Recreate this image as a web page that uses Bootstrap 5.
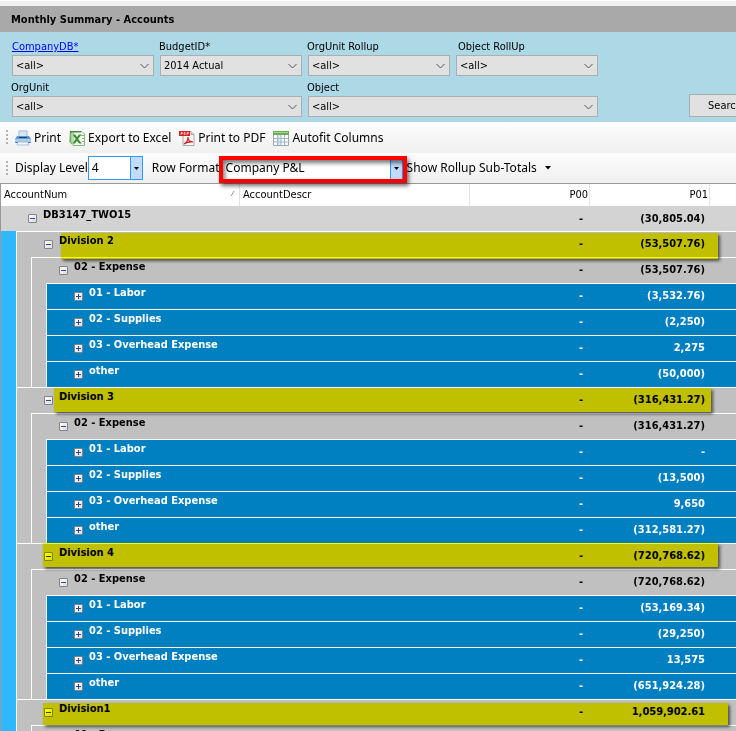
<!DOCTYPE html>
<html lang="en">
<head>
<meta charset="utf-8">
<meta name="viewport" content="width=device-width, initial-scale=1">
<title>Monthly Summary - Accounts</title>
<link href="https://cdn.jsdelivr.net/npm/bootstrap@5.3.0/dist/css/bootstrap.min.css" rel="stylesheet">
<style>
body{font-family:"DejaVu Sans Condensed","DejaVu Sans",sans-serif;font-size:11px;line-height:16px;color:#000;background:#fff;overflow:hidden}
.topline{height:6px;background:#f0f0f0;border-top:1px solid #fff}
.titlebar{height:26px;padding-left:11px;background:#a9a9a9}
.titlebar h1{font-size:11px;font-weight:700;line-height:28px;margin:0}
.filters{background:#add8e6;padding:6px 0 5px 12px;height:90px}
.fgrid{display:grid;grid-template-columns:repeat(4,142px);column-gap:6px;row-gap:3px;flex:none}
.wide{grid-column:span 2}
.fgrid label,.fgrid a{display:block;line-height:18px;height:17px;width:max-content;margin-left:-1px}
.fgrid a{color:#00f;margin-left:0}
.fgrid .near{margin-left:2px}
.form-select.pick{height:21px;padding:0 18px 0 3px;font-size:11px;line-height:19px;border:1px solid #adadad;border-radius:0;color:#000;background-color:#e1e1e1;background-size:9px 6px;background-position:right 4px center;background-image:url("data:image/svg+xml,%3Csvg xmlns='http://www.w3.org/2000/svg' viewBox='0 0 9 6'%3E%3Cpath d='M.5 1l4 4 4-4' fill='none' stroke='%23555'/%3E%3C/svg%3E")}
.btn.go{flex:none;width:72px;height:23px;margin-left:91px;padding:0;font-size:11px;line-height:19px;border:1px solid #adadad;border-radius:0;background:#e1e1e1;color:#000}
.tools{font-family:"Noto Sans",sans-serif;font-size:12px;padding-left:6px}
.tools.one{height:31px;background:linear-gradient(#fdfdfd,#f0f0f0)}
.tools.two{height:30px;background:linear-gradient(#fcfcfc,#f0f0f0)}
.grip{width:2px;height:15px;margin-right:7px;flex:none;background:repeating-linear-gradient(#b0b0b0 0 2px,transparent 2px 4px)}
.btn.tool{font-size:12px;line-height:16px;padding:0;border:0;border-radius:0;color:#000;display:flex;align-items:center;gap:3px;white-space:nowrap;flex:none}
.one .tool{margin-right:8px}
.two .tool{margin-left:4px}
.tool svg{width:16px;height:16px}
.tools label{white-space:nowrap;flex:none}
.tools .fl{margin:0 2px 0 9px}
.form-select.combo{height:24px;padding:0 18px 0 3px;border:1px solid #39f;border-radius:0;font-size:12px;line-height:22px;color:#000;background-color:#fff;background-size:12px 22px;background-position:right center;background-image:url("data:image/svg+xml,%3Csvg xmlns='http://www.w3.org/2000/svg' viewBox='0 0 12 22'%3E%3Cpath d='M0 0h12v22H0z' fill='%23c0dcfa'/%3E%3Cpath d='M0 0h1v22H0z' fill='%2339f'/%3E%3Cpath d='M4 10h5l-2.500 3z'/%3E%3C/svg%3E")}
.lvl{width:55px;flex:none}
.fmt{width:181px;flex:none}
.callout{position:absolute;inset:0 -4px -3px -3px;border:4px solid #f00;box-shadow:2px 3px 4px #0008,inset 2px 3px 4px #0008;pointer-events:none}
.accounts{table-layout:fixed;width:100%;border-collapse:separate;border-spacing:0;border-left:1px solid #999;border-top:1px solid #999}
.accounts th{height:22px;padding:0 1px 1px 3px;font-weight:400;line-height:14px;border-right:1px solid #e3e3e3;white-space:nowrap}
.accounts th:last-child{border-right:0}
.c1{width:239px}.c2{width:230px}.c3,.c4{width:120px}
.accounts td{height:26px;padding:0;font-weight:700;white-space:nowrap}
.accounts td+td{border-top:1px solid #fff}
.accounts .num{text-align:right;padding:0 5px 1px 0}
.accounts .num.zero{padding-right:7px}
.l0 td{background:#d3d3d3;height:25px}.l0 td+td{border-color:#d3d3d3}
.l1 td,.l2 td{background:#c0c0c0}
.l3 td{background:#0080c0;color:#fff}
.tree{height:26px}
.accounts .l0 td,.l0 .tree{height:25px}
.rail{width:15px;background:#30b8ff}
.guide{width:15px;background:#c0c0c0;border-left:1px solid #fff}
.node{display:flex;gap:6px;padding-left:27px;flex:1;border-top:1px solid #fff;border-left:1px solid #fff;line-height:17px}
.l0 .node{border:0}
.knob{position:relative;width:9px;height:9px;margin-top:8px;padding:0;border:1px solid #848484;border-radius:1px;background:linear-gradient(135deg,#fff,#dcdcdc);flex:none}
.knob::before,.l3 .knob::after{content:"";position:absolute;left:1px;top:3px;width:5px;height:1px;background:#2b4a9c}
.l3 .knob::after{left:3px;top:1px;width:1px;height:5px}
.marked{position:relative}
.glow{position:absolute;background:#ff0;mix-blend-mode:multiply;box-shadow:2px 2px 3px #0009;pointer-events:none;top:0;height:24px;left:42px;right:18px}
.g2{top:2px;height:26px;left:60px}
.g3{top:1px;left:53px;right:25px}
.g1{top:4px;height:22px;right:8px}
</style>
</head>
<body>
<div class="topline"></div>
<header class="titlebar"><h1>Monthly Summary - Accounts</h1></header>
<form class="filters d-flex align-items-end overflow-hidden">
  <div class="fgrid">
    <div><a href="#">CompanyDB*</a><select class="form-select pick" aria-label="CompanyDB"><option>&lt;all&gt;</option></select></div>
    <div><label for="bud">BudgetID*</label><select id="bud" class="form-select pick"><option>2014 Actual</option></select></div>
    <div><label for="our">OrgUnit Rollup</label><select id="our" class="form-select pick"><option>&lt;all&gt;</option></select></div>
    <div><label class="near" for="obr">Object RollUp</label><select id="obr" class="form-select pick"><option>&lt;all&gt;</option></select></div>
    <div class="wide"><label for="ou">OrgUnit</label><select id="ou" class="form-select pick"><option>&lt;all&gt;</option></select></div>
    <div class="wide"><label for="ob">Object</label><select id="ob" class="form-select pick"><option>&lt;all&gt;</option></select></div>
  </div>
  <button type="button" class="btn go">Search</button>
</form>
<div class="tools one d-flex align-items-center">
  <span class="grip"></span>
  <button type="button" class="btn tool"><svg viewBox="0 0 16 16"><path d="M4 1h8v6H4z" fill="#f4faff" stroke="#8fb2cf"/><path d="M5 3h6M5 5h6" stroke="#b9d3e6"/><path d="M2 6h12l2 3v4H0V9z" fill="#5d98cf"/><path d="M0 9h16v3H0z" fill="#a9cdea"/><path d="M4 7h8v1H4z" fill="#20466e"/><path d="M1 12h14v1H1z" fill="#2e6aa3"/><path d="M3 12h10l1 3H2z" fill="#eef6fc" stroke="#86a9c6" stroke-width=".6"/></svg>Print</button>
  <button type="button" class="btn tool"><svg viewBox="0 0 16 16"><path d="M4 1.500h9l2.500 2.500v11.500H4z" fill="#f3faef" stroke="#8ab77b"/><path d="M1 1h11v1.500H3v12L.5 12z" fill="#3f8f3a"/><path d="M1.500 3L3 2.500V14l-1.500-1.500z" fill="#a4d392"/><path d="M3.500 4.500h2.700L8 7l2-2.500h2.500L9.200 9l3.600 4.500H10L8 11l-2 2.500H3.300L6.700 9z" fill="#3f8f3a"/><path d="M12 5.500h3M13 8.500h2M13 11.500h2" stroke="#8ab77b"/></svg>Export to Excel</button>
  <button type="button" class="btn tool"><svg viewBox="0 0 16 16"><path d="M4 1.500h8l3 3v11H4z" fill="#f6f6f6" stroke="#a7a7a7"/><path d="M12 1.500v3h3" fill="#ddd" stroke="#a7a7a7"/><path d="M0 1h11v5H0z" fill="#d81e1e"/><path d="M2 5V2.500h1.500v1H2M5 2.500h1v2H5zM8 5V2.500h2M8 3.500h1.500" fill="none" stroke="#fff" stroke-width=".6"/><path d="M5 14c2-1 4-4 4-7 0 3 2 5 5 5-3-.5-6 0-9 2z" fill="none" stroke="#d81e1e" stroke-width="1.200"/></svg>Print to PDF</button>
  <button type="button" class="btn tool"><svg viewBox="0 0 16 16"><path d="M.5 1.500h15v14H.5z" fill="#fff" stroke="#9aa7b1"/><path d="M0 1h16v4H0z" fill="#6cae55"/><path d="M1 2h14v1H1z" fill="#a6d492"/><path d="M1 8.500h14M1 12h14M4.500 5v10M8 5v10M11.500 5v10" stroke="#9fb4c4"/><path d="M5 5h3v10H5z" fill="#9cc7ea" opacity=".4"/></svg>Autofit Columns</button>
</div>
<div class="tools two d-flex align-items-center">
  <span class="grip"></span>
  <label for="lv">Display Level</label>
  <select id="lv" class="form-select combo lvl"><option>4</option></select>
  <label for="fm" class="fl">Row Format</label>
  <div class="position-relative fmt"><select id="fm" class="form-select combo"><option>Company P&amp;L</option></select><span class="callout"></span></div>
  <button type="button" class="btn tool">Show Rollup Sub-Totals<svg viewBox="0 0 16 16"><path d="M5 6h6L8 9.500z"/></svg></button>
</div>
<table class="accounts">
  <colgroup><col class="c1"><col class="c2"><col class="c3"><col class="c4"><col></colgroup>
  <thead><tr><th><span class="d-flex justify-content-between">AccountNum<svg width="10" height="14" viewBox="0 0 10 14"><path d="M3 8l3-5" stroke="#999"/></svg></span></th><th>AccountDescr</th><th class="text-end">P00</th><th class="text-end">P01</th><th></th></tr></thead>
  <tbody id="rows"></tbody>
</table>
<script src="https://cdn.jsdelivr.net/npm/bootstrap@5.3.0/dist/js/bootstrap.bundle.min.js"></script>
<script>
const data=[
 [0,"DB3147_TWO15","(30,805.04)"],
 [1,"Division 2","(53,507.76)","g2"],[2,"02 - Expense","(53,507.76)"],[3,"01 - Labor","(3,532.76)"],[3,"02 - Supplies","(2,250)"],[3,"03 - Overhead Expense","2,275"],[3,"other","(50,000)"],
 [1,"Division 3","(316,431.27)","g3"],[2,"02 - Expense","(316,431.27)"],[3,"01 - Labor","-"],[3,"02 - Supplies","(13,500)"],[3,"03 - Overhead Expense","9,650"],[3,"other","(312,581.27)"],
 [1,"Division 4","(720,768.62)","g4"],[2,"02 - Expense","(720,768.62)"],[3,"01 - Labor","(53,169.34)"],[3,"02 - Supplies","(29,250)"],[3,"03 - Overhead Expense","13,575"],[3,"other","(651,924.28)"],
 [1,"Division1","1,059,902.61","g1"],[2,"01 - Revenue",""]];
document.getElementById("rows").innerHTML=data.map(([l,name,val,g])=>
 `<tr class="l${l} ${g?"marked":""}"><td><div class="tree d-flex">${l?'<span class="rail"></span>':""}${'<span class="guide"></span>'.repeat(Math.max(0,l-1))}<div class="node"><button type="button" class="knob" aria-label="Toggle ${name}"></button><span>${name}</span></div></div>${g?`<span class="glow ${g}"></span>`:""}</td><td></td><td class="num zero">${val?"-":""}</td><td class="num">${val}</td><td></td></tr>`).join("");
</script>
</body>
</html>
